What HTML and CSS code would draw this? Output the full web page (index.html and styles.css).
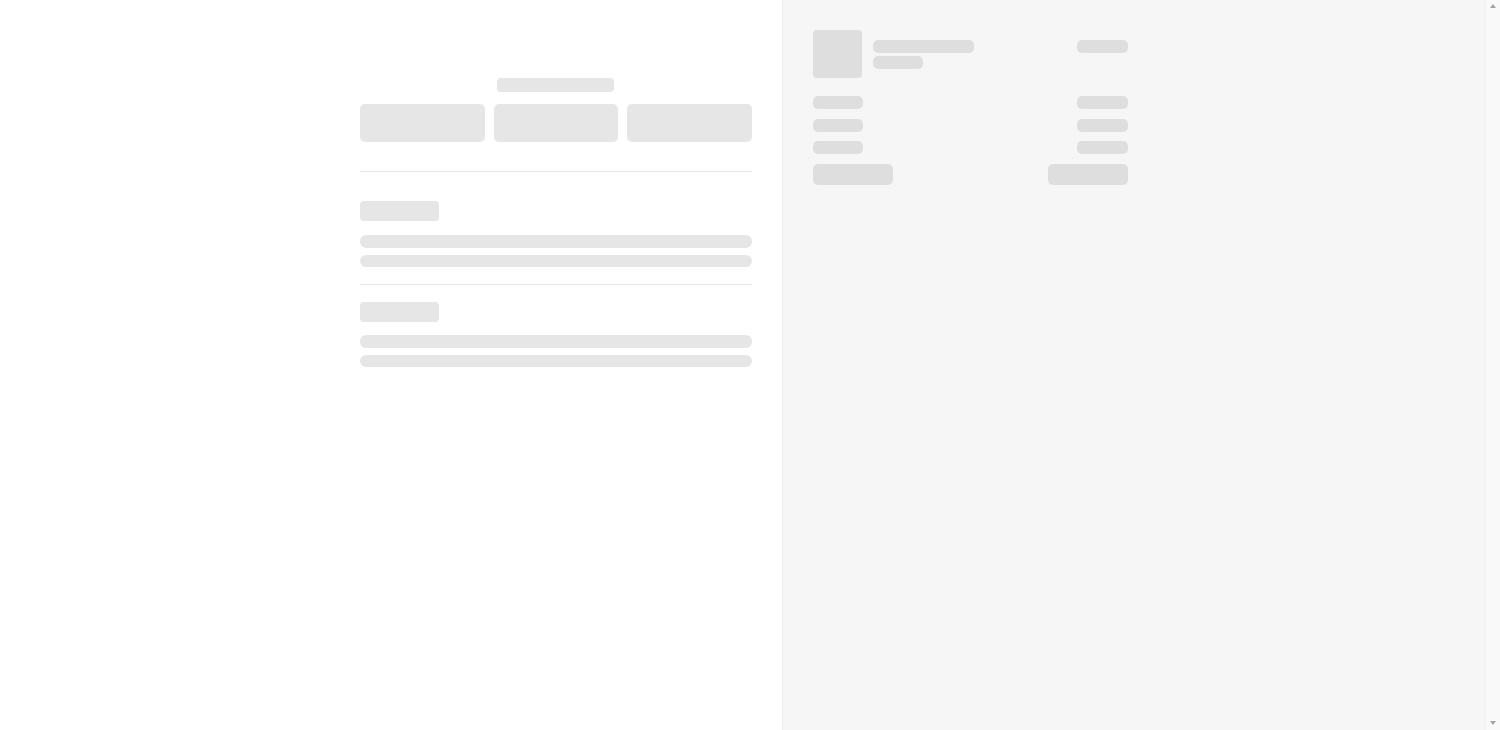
FILE: index.html
```html
<!DOCTYPE html>
<html lang="en">
<head>
<meta charset="utf-8">
<title>Checkout</title>
<link rel="stylesheet" href="styles.css">
</head>
<body>
<div class="page">
  <main class="main">
    <div class="main-inner">
      <div class="sk title"></div>
      <div class="buttons">
        <div class="sk btn"></div>
        <div class="sk btn"></div>
        <div class="sk btn"></div>
      </div>
      <hr class="divider first">
      <section class="section">
        <div class="sk label"></div>
        <div class="sk line"></div>
        <div class="sk line"></div>
      </section>
      <hr class="divider">
      <section class="section second">
        <div class="sk label"></div>
        <div class="sk line"></div>
        <div class="sk line"></div>
      </section>
    </div>
  </main>
  <aside class="summary">
    <div class="summary-inner">
      <div class="product">
        <div class="sk2 thumb"></div>
        <div class="product-text">
          <div class="sk2 name"></div>
          <div class="sk2 qty"></div>
        </div>
        <div class="sk2 price"></div>
      </div>
      <div class="rows">
        <div class="row"><div class="sk2 cell"></div><div class="sk2 cell"></div></div>
        <div class="row"><div class="sk2 cell"></div><div class="sk2 cell"></div></div>
        <div class="row"><div class="sk2 cell"></div><div class="sk2 cell"></div></div>
        <div class="row total"><div class="sk2 cell wide"></div><div class="sk2 cell wide"></div></div>
      </div>
    </div>
  </aside>
  <div class="scrollbar">
    <span class="arrow up"></span>
    <span class="arrow down"></span>
  </div>
</div>
</body>
</html>
```
FILE: styles.css
```css
html, body {
  height: 100%;
  overflow: hidden;
}
body {
  margin: 0;
  font-family: "Liberation Sans", Arial, sans-serif;
  background: #ffffff;
}
.page {
  display: flex;
  height: 730px;
}
.main {
  width: 752px;
  padding: 78px 30px 0 0;
  display: flex;
  justify-content: flex-end;
  background: #ffffff;
}
.main-inner {
  width: 392px;
  display: flex;
  flex-direction: column;
}
.sk {
  background: #e6e6e6;
  border-radius: 5px;
}
.sk2 {
  background: #dedede;
  border-radius: 5px;
}
.title {
  width: 117px;
  height: 14px;
  align-self: center;
  border-radius: 4px;
  position: relative;
  left: -1px;
}
.buttons {
  display: flex;
  gap: 9px;
  margin-top: 12px;
}
.btn {
  flex: 1;
  height: 38px;
  border-radius: 5px;
}
.divider {
  border: 0;
  height: 1px;
  background: #e8e8e8;
  margin: 17px 0 0 0;
  width: 100%;
}
.divider.first {
  margin-top: 29px;
}
.section {
  display: flex;
  flex-direction: column;
  margin-top: 29px;
}
.section.second {
  margin-top: 17px;
}
.label {
  width: 79px;
  height: 20px;
  border-radius: 4px;
  margin-bottom: 14px;
}
.section.second .label {
  margin-bottom: 13px;
}
.line {
  height: 12.5px;
  border-radius: 6px;
}
.line + .line {
  margin-top: 7px;
}
.summary {
  flex: 1;
  background: #f6f6f6;
  border-left: 1px solid #ececec;
  padding: 30px 0 0 30px;
}
.summary-inner {
  width: 315px;
}
.product {
  display: flex;
  align-items: flex-start;
}
.thumb {
  width: 49px;
  height: 48px;
  border-radius: 4px;
}
.product-text {
  display: flex;
  flex-direction: column;
  gap: 3px;
  margin: 10px 0 0 11px;
  flex: 1;
}
.name {
  width: 101px;
  height: 13px;
  border-radius: 5px;
}
.qty {
  width: 50px;
  height: 13px;
  border-radius: 5px;
}
.price {
  width: 51px;
  height: 13px;
  margin-top: 10px;
}
.rows {
  display: flex;
  flex-direction: column;
  gap: 9.5px;
  margin-top: 18px;
}
.row {
  display: flex;
  justify-content: space-between;
}
.cell {
  width: 50px;
  height: 13px;
}
.row .cell:last-child {
  width: 51px;
}
.row.total .cell.wide {
  width: 80px;
  height: 21px;
}
.scrollbar {
  width: 14px;
  background: #f9f9f9;
  border-left: 1px solid #f1f1f1;
  display: flex;
  flex-direction: column;
  justify-content: space-between;
  align-items: center;
  padding: 4px 0 5px;
}
.arrow {
  width: 0;
  height: 0;
  border-left: 3.5px solid transparent;
  border-right: 3.5px solid transparent;
}
.arrow.up {
  border-bottom: 4px solid #a3a3a3;
}
.arrow.down {
  border-top: 4px solid #a3a3a3;
}
```
